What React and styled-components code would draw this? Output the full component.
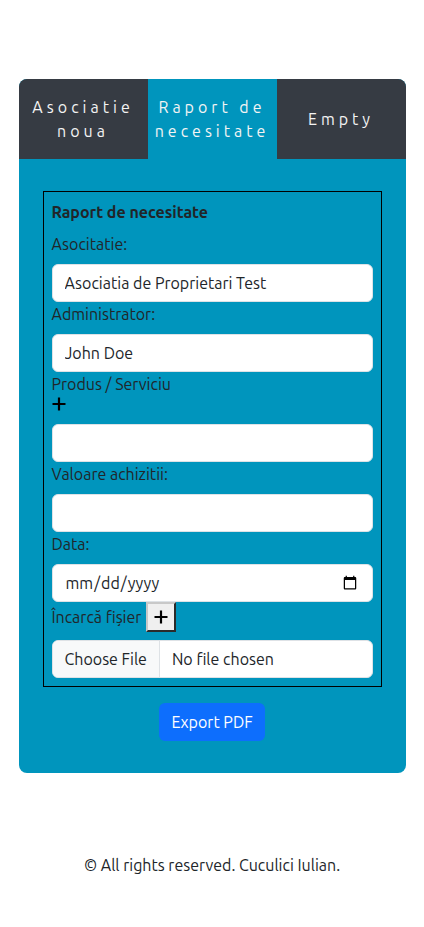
import React from "react";
import styled, { createGlobalStyle } from "styled-components";

const Global = createGlobalStyle`
  html, body { margin: 0; padding: 0; background: #fff; }
  body {
    font-family: Ubuntu, Lato, "Noto Sans", sans-serif;
    font-size: 16px;
    line-height: 24px;
    color: #212529;
  }
  * { box-sizing: border-box; }
`;

const Page = styled.div`
  padding-top: 79px;
  padding-bottom: 50px;
`;

const Card = styled.div`
  width: 387px;
  margin: 0 auto;
  border-radius: 8px;
  overflow: hidden;
  background: #0095bd;
`;

const Tabs = styled.div`
  display: grid;
  grid-template-columns: 129px 129px 129px;
  height: 80px;
`;

const Tab = styled.div`
  display: flex;
  align-items: center;
  justify-content: center;
  text-align: center;
  padding: 0 6px;
  background: ${(p) => (p.$active ? "#0095bd" : "#363b43")};
  color: #f4f4f4;
  letter-spacing: 4px;
  line-height: 24px;
`;

const Body = styled.div`
  padding: 32px 24px;
  display: flex;
  flex-direction: column;
  align-items: center;
`;

const FormBox = styled.form`
  width: 100%;
  border: 1px solid #000;
  padding: 8px;
  display: flex;
  flex-direction: column;
`;

const Title = styled.div`
  font-weight: 700;
  margin-bottom: 8px;
`;

const Label = styled.label`
  display: block;
  margin-bottom: ${(p) => (p.$tight ? "0" : "8px")};
`;

const Input = styled.input`
  display: block;
  width: 100%;
  height: 38px;
  padding: 6px 12px;
  font-family: inherit;
  font-size: 16px;
  line-height: 24px;
  color: #212529;
  background: #fff;
  border: 1px solid #dee2e6;
  border-radius: 6px;
  outline: none;

  &::file-selector-button {
    font-family: inherit;
    font-size: 16px;
    color: #212529;
    background: #f8f9fa;
    border: none;
    border-right: 1px solid #dee2e6;
    padding: 6px 12px;
    margin: -6px 12px -6px -12px;
    height: 36px;
  }
`;

const PlusLine = styled.div`
  height: 20px;
  margin-bottom: 8px;
  display: flex;
  align-items: flex-start;
  padding-top: 1px;
`;

const UploadRow = styled.div`
  display: flex;
  align-items: center;
  gap: 5px;
  height: 30px;
  margin-bottom: 8px;
`;

const SmallBtn = styled.button`
  width: 30px;
  height: 30px;
  padding: 0;
  display: flex;
  align-items: center;
  justify-content: center;
  background: #efefef;
  border: 2px solid;
  border-top-color: #c8c8c8;
  border-left-color: #c8c8c8;
  border-right-color: #2b2b2b;
  border-bottom-color: #2b2b2b;
`;

const ExportBtn = styled.button`
  margin-top: 16px;
  height: 38px;
  padding: 6px 12px;
  font-family: inherit;
  font-size: 16px;
  line-height: 24px;
  color: #fff;
  background: #0d6efd;
  border: none;
  border-radius: 6px;
`;

const Footer = styled.footer`
  margin-top: 80px;
  text-align: center;
`;

const Plus = ({ size = 14 }) => (
  <svg width={size} height={size} viewBox="0 0 14 14">
    <path d="M7 0.5V13.5M0.5 7H13.5" stroke="#000" strokeWidth="2.2" fill="none" />
  </svg>
);

export default function App() {
  return (
    <Page>
      <Global />
      <Card>
        <Tabs>
          <Tab>Asociatie noua</Tab>
          <Tab $active>Raport de necesitate</Tab>
          <Tab>Empty</Tab>
        </Tabs>
        <Body>
          <FormBox onSubmit={(e) => e.preventDefault()}>
            <Title>Raport de necesitate</Title>
            <Label>Asocitatie:</Label>
            <Input defaultValue="Asociatia de Proprietari Test" />
            <Label>Administrator:</Label>
            <Input defaultValue="John Doe" />
            <Label $tight>Produs / Serviciu</Label>
            <PlusLine>
              <Plus />
            </PlusLine>
            <Input />
            <Label>Valoare achizitii:</Label>
            <Input />
            <Label>Data:</Label>
            <Input type="date" />
            <UploadRow>
              <span>Încarcă fișier</span>
              <SmallBtn type="button">
                <Plus />
              </SmallBtn>
            </UploadRow>
            <Input type="file" />
          </FormBox>
          <ExportBtn type="button">Export PDF</ExportBtn>
        </Body>
      </Card>
      <Footer>© All rights reserved. Cuculici Iulian.</Footer>
    </Page>
  );
}
